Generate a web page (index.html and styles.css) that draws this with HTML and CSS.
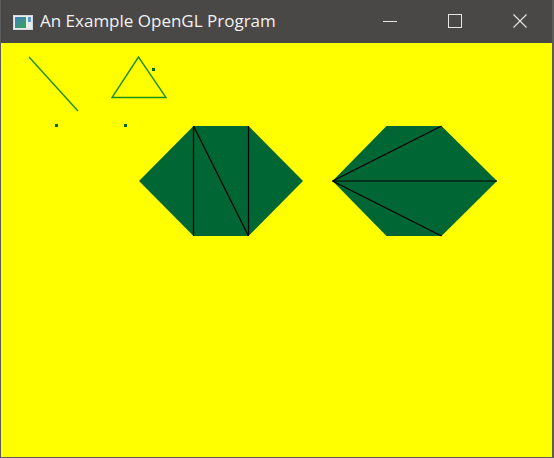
FILE: index.html
```html
<!DOCTYPE html>
<html>
<head>
<meta charset="utf-8">
<link rel="stylesheet" href="styles.css">
</head>
<body>
<div class="window">
  <div class="titlebar">
    <svg class="app-icon" width="20" height="15" viewBox="0 0 20 15">
      <defs>
        <linearGradient id="g" x1="0" y1="0" x2="1" y2="1">
          <stop offset="0" stop-color="#3d7fc4"/>
          <stop offset="1" stop-color="#3aa64a"/>
        </linearGradient>
      </defs>
      <rect x="0.5" y="0.5" width="19" height="14" fill="#e8ecef" stroke="#d4d8dc"/>
      <rect x="2" y="2" width="11" height="11" fill="url(#g)"/>
      <rect x="15" y="2" width="3" height="5" fill="#5b9bd0"/>
    </svg>
    <span class="title">An Example OpenGL Program</span>
    <div class="controls">
      <div class="btn">
        <svg width="16" height="16" viewBox="0 0 16 16"><line x1="1" y1="8.5" x2="15" y2="8.5" stroke="#e6e6e6" stroke-width="1"/></svg>
      </div>
      <div class="btn">
        <svg width="16" height="16" viewBox="0 0 16 16"><rect x="1.5" y="1.5" width="13" height="13" fill="none" stroke="#e6e6e6" stroke-width="1"/></svg>
      </div>
      <div class="btn">
        <svg width="16" height="16" viewBox="0 0 16 16"><path d="M1.5 1.5 L14.5 14.5 M14.5 1.5 L1.5 14.5" stroke="#e6e6e6" stroke-width="1.1"/></svg>
      </div>
    </div>
  </div>
  <svg class="canvas" width="551" height="414" viewBox="1 43 551 414">
    <rect x="1" y="43" width="551" height="414" fill="#ffff00"/>
    <g stroke="#1f8f1a" stroke-width="1.4" fill="none">
      <line x1="29" y1="57" x2="78" y2="111"/>
      <polygon points="138.5,57 112,97.5 166,97.5"/>
    </g>
    <g fill="#006633">
      <rect x="55" y="124" width="3" height="3"/>
      <rect x="124" y="124" width="3" height="3"/>
      <rect x="152" y="68" width="3" height="3"/>
      <polygon points="139,181 193.5,126 248.5,126 303,181 248.5,236 193.5,236"/>
      <polygon points="332.5,181 386.5,126 441.5,126 497,181 441.5,236 386.5,236"/>
    </g>
    <g stroke="#000" stroke-width="1.2" fill="none">
      <line x1="193.5" y1="126" x2="193.5" y2="236"/>
      <line x1="248.5" y1="126" x2="248.5" y2="236"/>
      <line x1="193.5" y1="126" x2="248.5" y2="236"/>
      <line x1="332.5" y1="181" x2="441.5" y2="126"/>
      <line x1="332.5" y1="181" x2="497" y2="181"/>
      <line x1="332.5" y1="181" x2="441.5" y2="236"/>
    </g>
  </svg>
</div>
</body>
</html>
```
FILE: styles.css
```css
html, body {
  margin: 0;
  padding: 0;
  background: #4a4a48;
}
.window {
  width: 551px;
  height: 457px;
  border-left: 1px solid #5c5c5c;
  border-right: 2px solid #5c5c5c;
  border-bottom: 1px solid #5c5c5c;
  background: #494846;
  display: flex;
  flex-direction: column;
}
.titlebar {
  height: 43px;
  display: flex;
  align-items: center;
  background: #494846;
  color: #f2f2f2;
}
.app-icon {
  margin-left: 12px;
  margin-top: 1px;
  display: block;
}
.title {
  margin-left: 7px;
  font-family: "Open Sans", "Noto Sans", sans-serif;
  font-size: 17px;
  letter-spacing: 0;
  margin-top: -2px;
}
.controls {
  margin-left: auto;
  display: flex;
  height: 43px;
}
.btn {
  width: 65px;
  height: 43px;
  display: flex;
  align-items: center;
  justify-content: center;
}
.btn svg {
  display: block;
  margin-top: -1px;
}
.canvas {
  display: block;
}
```
